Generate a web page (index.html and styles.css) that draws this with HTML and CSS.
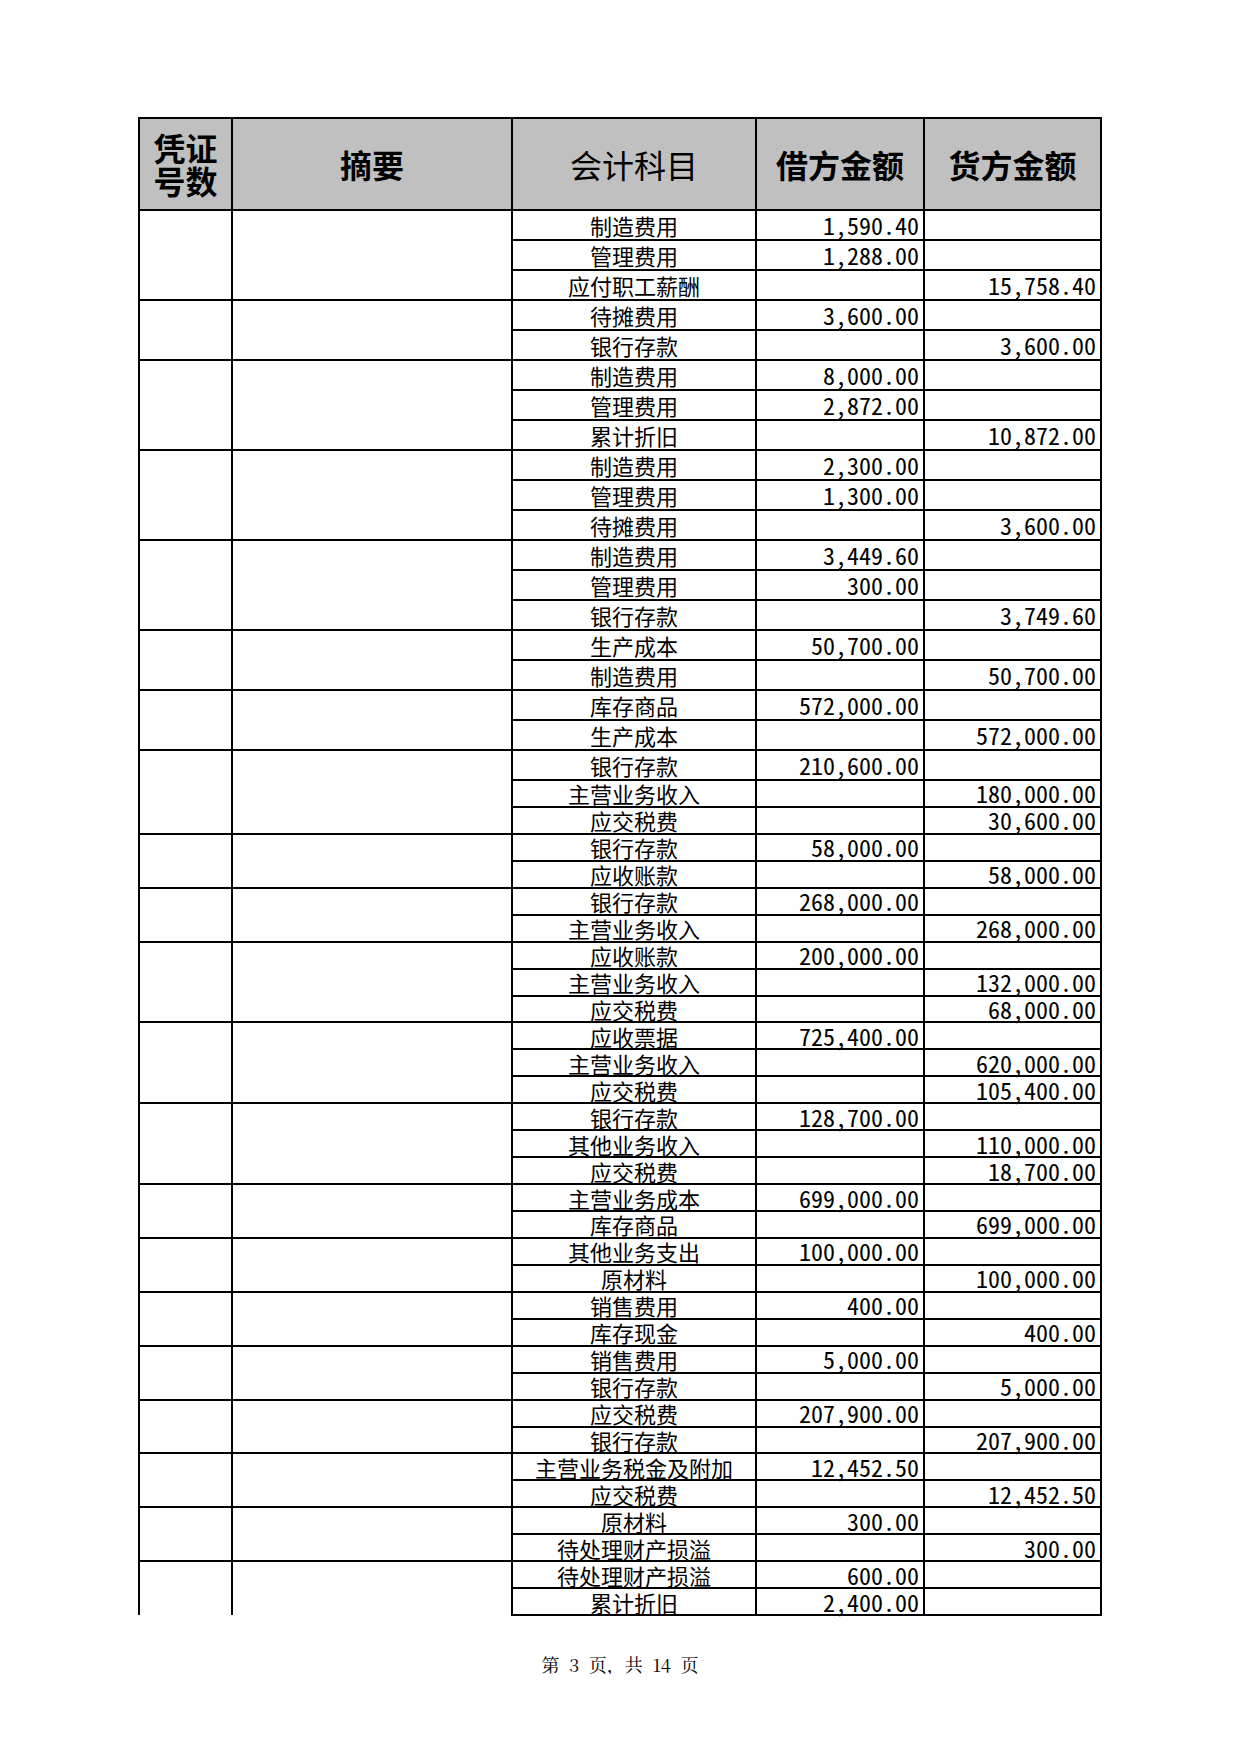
FILE: index.html
```html
<!DOCTYPE html>
<html lang="zh-CN">
<head>
<meta charset="utf-8">
<title>记账凭证汇总 第3页</title>
<link rel="stylesheet" href="styles.css">
</head>
<body>
<main class="sheet">
  <table class="ledger">
    <colgroup>
      <col class="c-no"><col class="c-sum"><col class="c-acct"><col class="c-dr"><col class="c-cr">
    </colgroup>
    <thead>
      <tr class="head">
        <th class="h-no"><span class="h-line">凭证</span><span class="h-line">号数</span></th>
        <th>摘要</th>
        <th class="h-light">会计科目</th>
        <th>借方金额</th>
        <th>货方金额</th>
      </tr>
    </thead>
    <tbody>
      <tr class="tall"><td rowspan="3"></td><td rowspan="3"></td><td class="acct">制造费用</td><td class="num">1,590.40</td><td class="num"></td></tr>
      <tr class="tall"><td class="acct">管理费用</td><td class="num">1,288.00</td><td class="num"></td></tr>
      <tr class="tall"><td class="acct">应付职工薪酬</td><td class="num"></td><td class="num">15,758.40</td></tr>

      <tr class="tall"><td rowspan="2"></td><td rowspan="2"></td><td class="acct">待摊费用</td><td class="num">3,600.00</td><td class="num"></td></tr>
      <tr class="tall"><td class="acct">银行存款</td><td class="num"></td><td class="num">3,600.00</td></tr>

      <tr class="tall"><td rowspan="3"></td><td rowspan="3"></td><td class="acct">制造费用</td><td class="num">8,000.00</td><td class="num"></td></tr>
      <tr class="tall"><td class="acct">管理费用</td><td class="num">2,872.00</td><td class="num"></td></tr>
      <tr class="tall"><td class="acct">累计折旧</td><td class="num"></td><td class="num">10,872.00</td></tr>

      <tr class="tall"><td rowspan="3"></td><td rowspan="3"></td><td class="acct">制造费用</td><td class="num">2,300.00</td><td class="num"></td></tr>
      <tr class="tall"><td class="acct">管理费用</td><td class="num">1,300.00</td><td class="num"></td></tr>
      <tr class="tall"><td class="acct">待摊费用</td><td class="num"></td><td class="num">3,600.00</td></tr>

      <tr class="tall"><td rowspan="3"></td><td rowspan="3"></td><td class="acct">制造费用</td><td class="num">3,449.60</td><td class="num"></td></tr>
      <tr class="tall"><td class="acct">管理费用</td><td class="num">300.00</td><td class="num"></td></tr>
      <tr class="tall"><td class="acct">银行存款</td><td class="num"></td><td class="num">3,749.60</td></tr>

      <tr class="tall"><td rowspan="2"></td><td rowspan="2"></td><td class="acct">生产成本</td><td class="num">50,700.00</td><td class="num"></td></tr>
      <tr class="tall"><td class="acct">制造费用</td><td class="num"></td><td class="num">50,700.00</td></tr>

      <tr class="tall"><td rowspan="2"></td><td rowspan="2"></td><td class="acct">库存商品</td><td class="num">572,000.00</td><td class="num"></td></tr>
      <tr class="tall"><td class="acct">生产成本</td><td class="num"></td><td class="num">572,000.00</td></tr>

      <tr class="tall"><td rowspan="3"></td><td rowspan="3"></td><td class="acct">银行存款</td><td class="num">210,600.00</td><td class="num"></td></tr>
      <tr class="short"><td class="acct">主营业务收入</td><td class="num"></td><td class="num">180,000.00</td></tr>
      <tr class="short"><td class="acct">应交税费</td><td class="num"></td><td class="num">30,600.00</td></tr>

      <tr class="short"><td rowspan="2"></td><td rowspan="2"></td><td class="acct">银行存款</td><td class="num">58,000.00</td><td class="num"></td></tr>
      <tr class="short"><td class="acct">应收账款</td><td class="num"></td><td class="num">58,000.00</td></tr>

      <tr class="short"><td rowspan="2"></td><td rowspan="2"></td><td class="acct">银行存款</td><td class="num">268,000.00</td><td class="num"></td></tr>
      <tr class="short"><td class="acct">主营业务收入</td><td class="num"></td><td class="num">268,000.00</td></tr>

      <tr class="short"><td rowspan="3"></td><td rowspan="3"></td><td class="acct">应收账款</td><td class="num">200,000.00</td><td class="num"></td></tr>
      <tr class="short"><td class="acct">主营业务收入</td><td class="num"></td><td class="num">132,000.00</td></tr>
      <tr class="short"><td class="acct">应交税费</td><td class="num"></td><td class="num">68,000.00</td></tr>

      <tr class="short"><td rowspan="3"></td><td rowspan="3"></td><td class="acct">应收票据</td><td class="num">725,400.00</td><td class="num"></td></tr>
      <tr class="short"><td class="acct">主营业务收入</td><td class="num"></td><td class="num">620,000.00</td></tr>
      <tr class="short"><td class="acct">应交税费</td><td class="num"></td><td class="num">105,400.00</td></tr>

      <tr class="short"><td rowspan="3"></td><td rowspan="3"></td><td class="acct">银行存款</td><td class="num">128,700.00</td><td class="num"></td></tr>
      <tr class="short"><td class="acct">其他业务收入</td><td class="num"></td><td class="num">110,000.00</td></tr>
      <tr class="short"><td class="acct">应交税费</td><td class="num"></td><td class="num">18,700.00</td></tr>

      <tr class="short"><td rowspan="2"></td><td rowspan="2"></td><td class="acct">主营业务成本</td><td class="num">699,000.00</td><td class="num"></td></tr>
      <tr class="short"><td class="acct">库存商品</td><td class="num"></td><td class="num">699,000.00</td></tr>

      <tr class="short"><td rowspan="2"></td><td rowspan="2"></td><td class="acct">其他业务支出</td><td class="num">100,000.00</td><td class="num"></td></tr>
      <tr class="short"><td class="acct">原材料</td><td class="num"></td><td class="num">100,000.00</td></tr>

      <tr class="short"><td rowspan="2"></td><td rowspan="2"></td><td class="acct">销售费用</td><td class="num">400.00</td><td class="num"></td></tr>
      <tr class="short"><td class="acct">库存现金</td><td class="num"></td><td class="num">400.00</td></tr>

      <tr class="short"><td rowspan="2"></td><td rowspan="2"></td><td class="acct">销售费用</td><td class="num">5,000.00</td><td class="num"></td></tr>
      <tr class="short"><td class="acct">银行存款</td><td class="num"></td><td class="num">5,000.00</td></tr>

      <tr class="short"><td rowspan="2"></td><td rowspan="2"></td><td class="acct">应交税费</td><td class="num">207,900.00</td><td class="num"></td></tr>
      <tr class="short"><td class="acct">银行存款</td><td class="num"></td><td class="num">207,900.00</td></tr>

      <tr class="short"><td rowspan="2"></td><td rowspan="2"></td><td class="acct">主营业务税金及附加</td><td class="num">12,452.50</td><td class="num"></td></tr>
      <tr class="short"><td class="acct">应交税费</td><td class="num"></td><td class="num">12,452.50</td></tr>

      <tr class="short"><td rowspan="2"></td><td rowspan="2"></td><td class="acct">原材料</td><td class="num">300.00</td><td class="num"></td></tr>
      <tr class="short"><td class="acct">待处理财产损溢</td><td class="num"></td><td class="num">300.00</td></tr>

      <tr class="short"><td rowspan="2" class="open"></td><td rowspan="2" class="open"></td><td class="acct">待处理财产损溢</td><td class="num">600.00</td><td class="num"></td></tr>
      <tr class="short"><td class="acct">累计折旧</td><td class="num">2,400.00</td><td class="num"></td></tr>
    </tbody>
  </table>
</main>
<footer class="pager">第 3 页，共 14 页</footer>
</body>
</html>
```

FILE: styles.css
```css
html, body {
  margin: 0;
  padding: 0;
  background: #ffffff;
}

body {
  width: 1240px;
  color: #000000;
  font-family: "Noto Sans CJK SC", "Noto Sans", sans-serif;
}

.sheet {
  padding: 117px 0 0 138px;
}

.ledger {
  border-collapse: collapse;
  table-layout: fixed;
  width: 964px;
}

.c-no { width: 93px; }
.c-sum { width: 280px; }
.c-acct { width: 244px; }
.c-dr { width: 168px; }
.c-cr { width: 177px; }

.ledger th,
.ledger td {
  border: 2px solid #000000;
  padding: 0;
  white-space: nowrap;
}

.head {
  height: 92px;
}

.ledger th {
  background: #c0c0c0;
  font-size: 32px;
  font-weight: 700;
  line-height: 36px;
  text-align: center;
  vertical-align: middle;
}

.ledger th.h-no {
  line-height: 33px;
}

.h-line {
  display: block;
}

.ledger th.h-light {
  font-weight: 400;
}

.tall {
  height: 30px;
}

.short {
  height: 26.95px;
}

.acct {
  text-align: center;
  vertical-align: middle;
  font-size: 22px;
  line-height: 22px;
}

.num {
  text-align: right;
  vertical-align: middle;
  font-family: "Noto Sans Mono CJK SC", "Liberation Mono", monospace;
  font-size: 24px;
  line-height: 22px;
}

.ledger td.num {
  padding-right: 4px;
}

.ledger td.open {
  border-bottom-style: hidden;
}

.pager {
  margin-top: 38px;
  text-align: center;
  font-family: "Noto Serif CJK SC", "Noto Sans CJK SC", "Liberation Serif", serif;
  font-size: 18px;
  line-height: 20px;
  word-spacing: 5px;
}
```
